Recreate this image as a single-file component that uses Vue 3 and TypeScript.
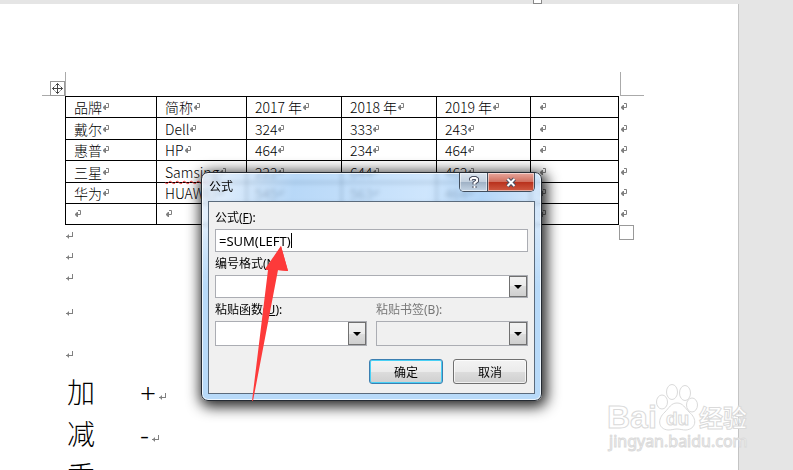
<script setup lang="ts">
import { ref } from 'vue'

interface Row {
  cells: string[]
}

const rows: Row[] = [
  { cells: ['品牌', '简称', '2017 年', '2018 年', '2019 年', ''] },
  { cells: ['戴尔', 'Dell', '324', '333', '243', ''] },
  { cells: ['惠普', 'HP', '464', '234', '464', ''] },
  { cells: ['三星', 'Samsing', '222', '644', '462', ''] },
  { cells: ['华为', 'HUAWEI', '545', '563', '464', ''] },
  { cells: ['', '', '', '', '', ''] },
]

const symbols = [
  { name: '加', sign: '+' },
  { name: '减', sign: '-' },
  { name: '乘', sign: '×' },
]

const formula = ref('=SUM(LEFT)')
</script>

<template>
  <div class="workspace">
    <span class="handle"></span>
    <main class="page">
      <div class="corners">
        <span class="corner left"></span>
        <span class="corner right"></span>
        <svg class="move" viewBox="0 0 15 15" aria-hidden="true">
          <rect x=".5" y=".5" width="14" height="14" fill="#fff" stroke="#999" />
          <path d="M7.5 2.5v10M2.5 7.5h10M5.5 4.5l2-2 2 2M5.5 10.5l2 2 2-2M4.5 5.5l-2 2 2 2M10.5 5.5l2 2-2 2" fill="none" stroke="#444" />
        </svg>
      </div>

      <div class="table-wrap">
        <table class="sheet">
          <colgroup>
            <col class="c1" /><col class="c2" /><col class="c3" /><col class="c3" /><col class="c5" /><col class="c6" /><col class="c7" />
          </colgroup>
          <tbody>
            <tr v-for="(row, r) in rows" :key="r">
              <td v-for="(cell, c) in row.cells" :key="c">
                <div class="cell">
                  <span :class="{ typo: cell === 'Samsing' }">{{ cell }}</span>
                  <svg class="mark" viewBox="0 0 8 8"><path d="M4 .5H6.500V4.500H1M2.500 2.500v4M1.500 3.500v2M3.500 2v5" /></svg>
                </div>
              </td>
              <td class="row-end">
                <div class="cell">
                  <svg class="mark" viewBox="0 0 8 8"><path d="M4 .5H6.500V4.500H1M2.500 2.500v4M1.500 3.500v2M3.500 2v5" /></svg>
                </div>
              </td>
            </tr>
          </tbody>
        </table>
        <span class="resize"></span>
      </div>

      <div class="paras">
        <p v-for="n in 5" :key="n" :class="['para', { tall: n > 3 }]">
          <svg class="mark" viewBox="0 0 8 8"><path d="M6.500 0V5M7 4.500H0M1.500 3.500v2M2.500 2.500v4" /></svg>
        </p>
      </div>

      <div v-for="s in symbols" :key="s.name" class="symbol">
        <span class="name">{{ s.name }}</span>
        <span>{{ s.sign }}</span>
        <svg class="mark" viewBox="0 0 8 8"><path d="M6.500 0V5M7 4.500H0M1.500 3.500v2M2.500 2.500v4" /></svg>
      </div>
    </main>

    <section class="dialog" role="dialog" aria-labelledby="dialog-title">
      <header class="titlebar">
        <h1 id="dialog-title">公式</h1>
        <div class="caption">
          <button class="help" type="button" aria-label="?">
            <svg viewBox="0 0 14 13"><path d="M4 4.500V3L5.500 2h3L10 3v2L7.500 7v1.500M7.500 10v2" class="o" /><path d="M4 4.500V3L5.500 2h3L10 3v2L7.500 7v1.500M7.500 10v2" class="i" /></svg>
          </button>
          <button class="close" type="button" aria-label="×">
            <svg viewBox="0 0 14 13"><path d="M3.500 3l7 7M10.500 3l-7 7" class="o" /><path d="M3.500 3l7 7M10.500 3l-7 7" class="i" /></svg>
          </button>
        </div>
      </header>
      <form class="client" @submit.prevent>
        <label for="formula">公式(<u>F</u>):</label>
        <div class="textbox">
          <input id="formula" v-model="formula" type="text" />
          <span class="caret"></span>
        </div>
        <label for="format">编号格式(<u>N</u>):</label>
        <div class="combo first">
          <select id="format"></select>
          <span class="drop"></span>
        </div>
        <div class="pair">
          <div class="field">
            <label for="func">粘贴函数(<u>U</u>):</label>
            <div class="combo">
              <select id="func"></select>
              <span class="drop"></span>
            </div>
          </div>
          <div class="field off">
            <label for="bookmark">粘贴书签(B):</label>
            <div class="combo">
              <select id="bookmark" disabled></select>
              <span class="drop"></span>
            </div>
          </div>
        </div>
        <div class="actions">
          <button class="push primary" type="submit">确定</button>
          <button class="push" type="button">取消</button>
        </div>
      </form>
    </section>

    <svg class="pointer" viewBox="0 0 40 156" aria-hidden="true">
      <path d="M31 0L38 25L28 24L3 155H2L18 24L16 24L17 22Z" fill="#fd3a3a" />
      <path d="M31 0L38 25L15 23Z" fill="#fd3a3a" />
    </svg>

    <svg class="watermark" viewBox="0 0 160 80" aria-hidden="true">
      <g class="logo">
        <text x="7" y="53" class="big">Bai</text>
        <ellipse cx="62" cy="27" rx="5.500" ry="7" />
        <ellipse cx="72" cy="17" rx="5.500" ry="7.500" />
        <ellipse cx="85" cy="18" rx="5.500" ry="7.500" />
        <ellipse cx="92" cy="30" rx="5.500" ry="7" />
        <path d="M77 28c6 0 8 5 12 9 9 7 7 17-3 18-4 0-6-1-9-1s-5 1-9 1c-10-1-11-11-3-18 4-4 6-9 12-9z" />
        <text x="66" y="50" class="du">du</text>
        <text x="99" y="52" class="cn">经验</text>
        <text x="9" y="72" class="url">jingyan.baidu.com</text>
      </g>
    </svg>
  </div>
</template>

<style>
body {
  margin: 0;
  overflow: hidden;
}
</style>

<style scoped>
* {
  box-sizing: border-box;
}

.workspace {
  position: relative;
  height: 100vh;
  overflow: hidden;
  padding: 4px 54px 0 0;
  background: #e5e5e5;
  font-family: "Noto Sans", "Noto Sans CJK SC", sans-serif;
  color: #000;
}

.handle {
  position: absolute;
  left: 533px;
  top: -5px;
  width: 9px;
  height: 9px;
  border: 1px solid #888;
  background: #fff;
}

.page {
  min-height: 100%;
  padding: 68px 0 0 65px;
  background: #fff;
  border-right: 1px solid #c4c4c4;
}

.corners {
  position: relative;
  width: 556px;
  height: 24px;
}

.corner {
  position: absolute;
  top: 0;
  width: 24px;
  height: 24px;
  border-bottom: 1px solid #aaa;
}

.corner.left {
  right: 100%;
  border-right: 1px solid #aaa;
  margin-right: -1px;
}

.corner.right {
  left: 100%;
  border-left: 1px solid #aaa;
  margin-left: -1px;
}

.move {
  position: absolute;
  left: -15px;
  top: 9px;
  width: 15px;
  height: 15px;
}

.table-wrap {
  position: relative;
  width: 571px;
}

.sheet {
  width: 571px;
  table-layout: fixed;
  border-collapse: collapse;
  font-family: "Noto Sans CJK SC", sans-serif;
  font-size: 14px;
  font-weight: 300;
  line-height: 20px;
}

.c1 { width: 91px; }
.c2 { width: 90px; }
.c3 { width: 95px; }
.c5 { width: 94px; }
.c6 { width: 88px; }
.c7 { width: 18px; }

.sheet td {
  height: 21px;
  padding: 0 0 0 8px;
  border: 1px solid #000;
  white-space: nowrap;
}

.sheet tr:nth-child(even):not(:last-child) td {
  height: 22px;
}

.sheet td.row-end {
  padding-left: 1px;
  border: 0;
}

.cell {
  display: flex;
  align-items: center;
  height: 20px;
}

.typo {
  text-decoration: underline wavy #e33 1px;
  text-underline-offset: 2px;
}

.mark {
  flex: none;
  width: 8px;
  height: 8px;
  overflow: visible;
}

.mark path {
  fill: none;
  stroke: #808080;
}

.resize {
  position: absolute;
  left: 554px;
  top: 129px;
  width: 15px;
  height: 15px;
  border: 1px solid #999;
}

.para {
  display: flex;
  align-items: center;
  height: 21px;
  margin: 0 0 0 1px;
}

.para.tall {
  height: 42px;
  padding-top: 8px;
}

.symbol {
  display: flex;
  align-items: center;
  height: 42px;
  padding-left: 2px;
  font-size: 28px;
  font-weight: 300;
  line-height: 40px;
}

.symbol span {
  height: 42px;
}

.symbol .name {
  width: 73px;
}

.symbol .mark {
  margin: 8px 0 0 3px;
}

.dialog {
  position: absolute;
  left: 201px;
  top: 172px;
  width: 341px;
  padding: 0 6px 6px;
  border: 1px solid #252b33;
  border-radius: 7px;
  background:
    linear-gradient(transparent 20%, #b8daf9 50%),
    linear-gradient(100deg, rgba(225, 238, 252, .75), rgba(160, 203, 245, .75) 25%, rgba(190, 221, 252, .75) 60%, rgba(155, 200, 245, .75) 75%, rgba(225, 238, 252, .75));
  backdrop-filter: blur(2px);
  box-shadow: inset 0 0 0 1px rgba(255, 255, 255, .75), 2px 3px 14px 3px rgba(0, 0, 0, .85);
  font-size: 12px;
}

.titlebar {
  display: flex;
  justify-content: space-between;
  height: 28px;
  padding-left: 1px;
}

.titlebar h1 {
  margin: 0;
  font-size: 12px;
  font-weight: 400;
  line-height: 28px;
}

.caption {
  display: flex;
  height: 19px;
  border: 1px solid #414d5c;
  border-top: 0;
  border-radius: 0 0 5px 5px;
  overflow: hidden;
}

.caption button {
  display: grid;
  place-items: center;
  padding: 0;
  border: 0;
  box-shadow: inset 0 0 0 1px rgba(255, 255, 255, .5);
}

.caption svg {
  width: 14px;
  height: 13px;
}

.help {
  width: 27px;
  background: linear-gradient(#dbe5ef, #c3d0de 48%, #9eb0c4 50%, #c5d5e5);
}

.caption .close {
  width: 47px;
  border-left: 1px solid #414d5c;
  background: linear-gradient(#e8a79d, #d0705f 48%, #b8301b 50%, #cf5a42);
}

.o {
  fill: none;
  stroke: #4a4f60;
  stroke-width: 4;
}

.i {
  fill: none;
  stroke: #fff;
  stroke-width: 2;
}

.client {
  padding: 7px 6px 9px;
  border: 1px solid #5b6b7c;
  background: #f0f0f0;
}

.client label {
  display: block;
  height: 20px;
  line-height: 18px;
}

.textbox {
  display: flex;
  align-items: center;
  height: 23px;
  margin-bottom: 3px;
  padding: 0 3px;
  border: 1px solid #abadb3;
  background: #fff;
}

.textbox input {
  field-sizing: content;
  min-width: 0;
  height: 21px;
  padding: 0;
  border: 0;
  background: transparent;
  font-family: inherit;
  font-size: 13px;
  outline: 0;
}

.caret {
  width: 1px;
  height: 15px;
  background: #000;
}

.combo {
  display: grid;
  grid-template-columns: 1fr 18px;
  height: 25px;
  border: 1px solid #abadb3;
  background: #fff;
}

.combo.first {
  height: 23px;
  margin-bottom: 3px;
}

.combo select {
  appearance: none;
  min-width: 0;
  border: 0;
  background: transparent;
  font: inherit;
}

.drop {
  display: grid;
  place-items: center;
  border: 1px solid #707070;
  background: linear-gradient(#f2f2f2, #ebebeb 50%, #ddd 50%, #cfcfcf);
}

.drop::after {
  content: "";
  border: 4px solid transparent;
  border-top-color: #000;
  border-bottom: 0;
}

.pair {
  display: grid;
  grid-template-columns: 1fr 1fr;
  gap: 9px;
}

.off {
  color: #777;
}

.off .combo {
  background: #f0f0f0;
}

.actions {
  display: flex;
  justify-content: flex-end;
  gap: 10px;
  padding: 13px 1px 0 0;
}

.push {
  width: 74px;
  height: 25px;
  padding: 0;
  border: 1px solid #707070;
  border-radius: 3px;
  background: linear-gradient(#f3f3f3, #ebebeb 50%, #ddd 50%, #cfcfcf);
  box-shadow: inset 0 0 0 1px rgba(255, 255, 255, .7);
  font: inherit;
}

.push.primary {
  border-color: #3c7fb1;
  box-shadow: inset 0 0 0 1px #48d0f5;
}

.pointer {
  position: absolute;
  left: 250px;
  top: 246px;
  width: 40px;
  height: 156px;
}

.watermark {
  position: absolute;
  left: 600px;
  top: 375px;
  width: 160px;
  height: 80px;
}

.logo {
  fill: #fff;
  stroke: #dadada;
  stroke-width: 1;
}

.big {
  font: 700 32px "Liberation Sans", sans-serif;
}

.du {
  font: 700 19px "Liberation Sans", sans-serif;
}

.cn {
  font: 700 24px "Noto Sans CJK SC", sans-serif;
}

.url {
  font: 400 16px "Noto Sans", sans-serif;
}
</style>
